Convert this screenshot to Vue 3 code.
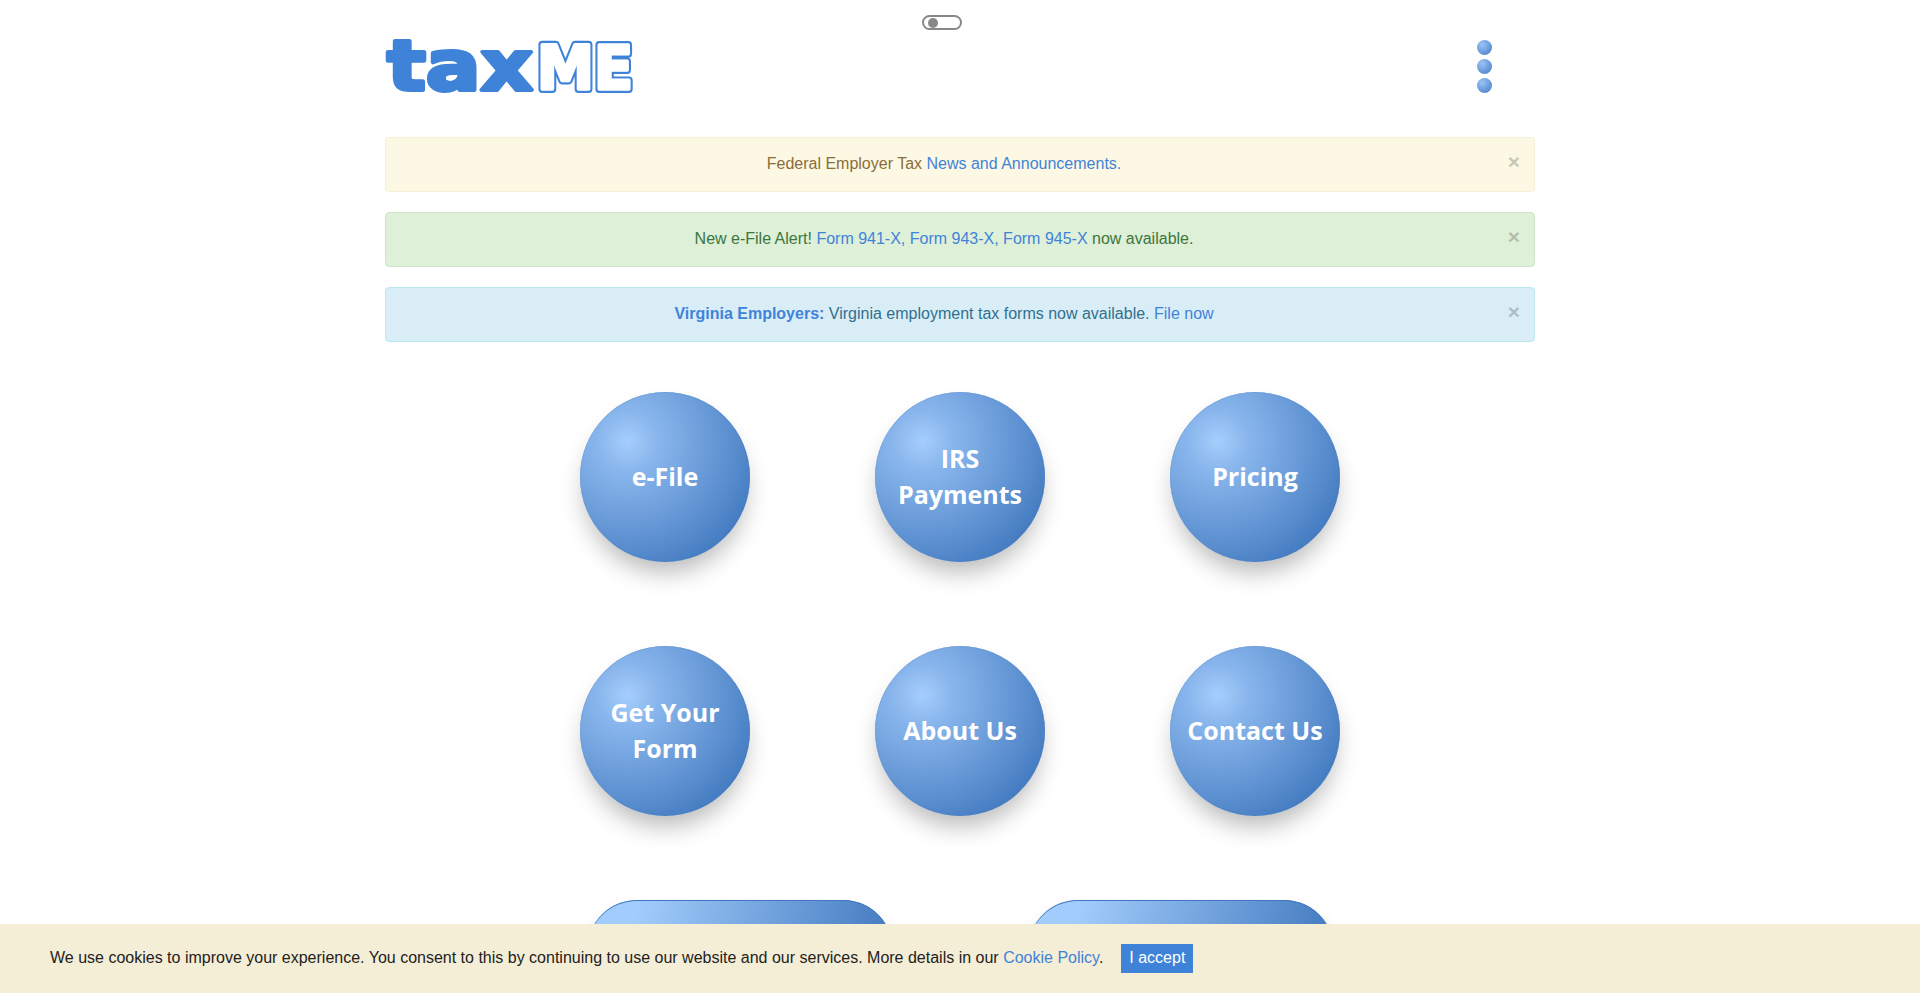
<script setup>
const alerts = [
  { kind: 'warn', parts: [['t', 'Federal Employer Tax '], ['a', 'News and Announcements.']] },
  { kind: 'ok', parts: [['t', 'New e-File Alert! '], ['a', 'Form 941-X, Form 943-X, Form 945-X'], ['t', ' now available.']] },
  { kind: 'info', parts: [['b', 'Virginia Employers:'], ['t', ' Virginia employment tax forms now available. '], ['a', 'File now']] },
]
const circles = [['e-File'], ['IRS', 'Payments'], ['Pricing'], ['Get Your', 'Form'], ['About Us'], ['Contact Us']]
</script>

<template>
  <div class="page">
    <div class="toggle-row">
      <span class="toggle"><span class="knob"></span></span>
    </div>
    <header class="head">
      <svg class="logo" width="260" height="70" viewBox="0 0 260 70" role="img" aria-label="taxME">
        <text x="2" y="60" class="tax" textLength="146" lengthAdjust="spacingAndGlyphs">tax</text>
        <text x="152" y="59" class="me me-outer" textLength="96" lengthAdjust="spacingAndGlyphs">ME</text>
        <text x="152" y="59" class="me me-inner" textLength="96" lengthAdjust="spacingAndGlyphs" aria-hidden="true">ME</text>
      </svg>
      <div class="dots"><span></span><span></span><span></span></div>
    </header>
    <section class="alerts">
      <div v-for="(al, i) in alerts" :key="i" class="alert" :class="al.kind">
        <span class="msg"><template v-for="(p, j) in al.parts" :key="j"><a v-if="p[0] === 'a'" href="#">{{ p[1] }}</a><b v-else-if="p[0] === 'b'">{{ p[1] }}</b><template v-else>{{ p[1] }}</template></template></span>
        <span class="close">×</span>
      </div>
    </section>
    <section class="grid">
      <a v-for="(c, i) in circles" :key="i" class="ball" href="#">
        <span v-for="l in c" :key="l">{{ l }}</span>
      </a>
    </section>
    <section class="pills">
      <a class="pill" href="#"></a>
      <a class="pill" href="#"></a>
    </section>
    <div class="cookie">
      <span>We use cookies to improve your experience. You consent to this by continuing to use our website and our services. More details in our <a href="#">Cookie Policy</a>.</span>
      <button class="accept">I accept</button>
    </div>
  </div>
</template>

<style>
html, body { margin: 0; overflow: hidden; height: 100%; background: #fff; }
</style>

<style scoped>
.page {
  font-family: "Liberation Sans", Arial, sans-serif;
  font-size: 16px;
  line-height: 1.42857;
  color: #333;
  height: 993px;
  overflow: hidden;
}
a { color: #3f83d9; text-decoration: none; }
.toggle-row {
  height: 15px;
  padding: 15px 0 0 922px;
}
.toggle {
  display: block;
  width: 40px;
  height: 15px;
  box-sizing: border-box;
  border: 2px solid #888;
  border-radius: 8px;
  padding: 0.5px 0 0 4px;
}
.knob {
  display: block;
  width: 10px;
  height: 10px;
  border-radius: 50%;
  background: #888;
}
.head {
  width: 1150px;
  margin: 0 auto;
  height: 107px;
  display: flex;
  align-items: flex-start;
  justify-content: space-between;
}
.logo { display: block; overflow: visible; }
.tax {
  font-family: "DejaVu Sans", sans-serif;
  font-weight: 700;
  font-size: 70px;
  fill: #3f83d9;
  stroke: #3f83d9;
  stroke-width: 4px;
  stroke-linejoin: round;
}
.me {
  font-family: "DejaVu Sans", sans-serif;
  font-weight: 700;
  font-size: 60px;
  stroke-linejoin: round;
}
.me-outer { fill: #3f83d9; stroke: #3f83d9; stroke-width: 8px; }
.me-inner { fill: #fff; stroke: #fff; stroke-width: 3.6px; }
.dots {
  display: flex;
  flex-direction: column;
  gap: 4px;
  margin: 10px 43px 0 0;
}
.dots span {
  display: block;
  width: 15px;
  height: 15px;
  border-radius: 50%;
  background: radial-gradient(circle at 35% 30%, #9cc4f6, #3f78c4);
}
.alerts {
  width: 1150px;
  margin: 0 auto;
  display: flex;
  flex-direction: column;
  gap: 20px;
}
.alert {
  position: relative;
  box-sizing: border-box;
  border: 1px solid;
  border-radius: 4px;
  padding: 15px 47px 15px 15px;
  height: 55px;
  text-align: center;
}
.msg { display: block; }
.warn { background: #fcf8e3; border-color: #f5efd5; color: #8a6d3b; }
.ok { background: #dff0d8; border-color: #d0e5c7; color: #3c763d; }
.info { background: #d9edf7; border-color: #bce8f1; color: #31708f; }
.info b { color: #3f83d9; }
.close {
  position: absolute;
  top: 13px;
  right: 14px;
  font-size: 21px;
  line-height: 1;
  font-weight: 700;
  color: #000;
  opacity: 0.2;
}
.grid {
  width: 1000px;
  margin: 50px auto 0;
  display: grid;
  grid-template-columns: repeat(3, 170px);
  justify-content: center;
  column-gap: 125px;
  row-gap: 84px;
}
.ball {
  width: 170px;
  height: 170px;
  box-sizing: border-box;
  padding-bottom: 2px;
  border-radius: 50%;
  display: flex;
  flex-direction: column;
  align-items: center;
  justify-content: center;
  background: radial-gradient(circle at 28% 29%, #a5cefc 0%, #88b5ec 18%, #6c9dda 45%, #3b74bb 88%);
  box-shadow: inset 0 0 1px #3b74bb, 0 15px 24px -5px rgba(0, 0, 0, 0.28);
  color: #fff;
  font-family: "Open Sans", sans-serif;
  font-weight: 700;
  font-size: 25px;
  line-height: 36px;
}
.pills {
  margin: 84px auto 0;
  width: 747px;
  display: flex;
  justify-content: space-between;
}
.pill {
  display: block;
  width: 306px;
  height: 170px;
  border-radius: 50px;
  background: linear-gradient(100deg, #a2ccfb 15%, #3b74bb 100%);
  box-shadow: inset 0 1px 0 #3f78bf, 0 15px 24px -5px rgba(0, 0, 0, 0.28);
}
.cookie {
  position: fixed;
  left: 0;
  right: 0;
  bottom: 0;
  height: 69px;
  box-sizing: border-box;
  padding: 0 50px;
  display: flex;
  align-items: center;
  gap: 18px;
  background: #f5eed6;
  color: #222;
}
.accept {
  width: 72px;
  height: 29px;
  border: 0;
  padding: 0;
  background: #3f83d9;
  color: #fff;
  font: inherit;
}
</style>
